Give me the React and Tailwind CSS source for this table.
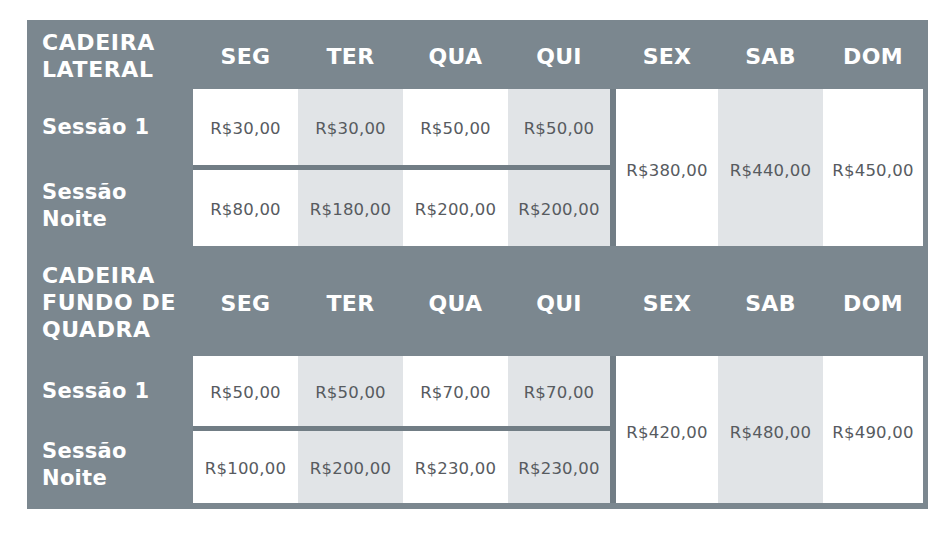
import React from "react";

const days = ["SEG", "TER", "QUA", "QUI"];
const days2 = ["SEX", "SAB", "DOM"];

function HeaderCell({ children }) {
  return (
    <div className="flex items-center justify-center pt-[4px] text-white font-bold text-[22px] tracking-[0.3px]">
      {children}
    </div>
  );
}

function Price({ children, gray, span }) {
  return (
    <div
      className={
        "flex items-center justify-center text-[#575b5f] text-[16.5px] tracking-[0.2px] " +
        (gray ? "bg-[#e1e4e7] " : "bg-white ") +
        (span ? "row-span-3 pt-[7px]" : "pt-[5px]")
      }
    >
      {children}
    </div>
  );
}

function Section({ title, r1, r2, weekend }) {
  return (
    <>
      <div className="flex items-center pl-[15px] pt-[2px] text-white font-bold text-[22px] leading-[27px] tracking-[0.6px]">
        <div>{title}</div>
      </div>
      {days.map((d) => (
        <HeaderCell key={d}>{d}</HeaderCell>
      ))}
      <div />
      {days2.map((d) => (
        <HeaderCell key={d}>{d}</HeaderCell>
      ))}

      <div className="flex items-center pl-[15px] text-white font-bold text-[21px] leading-[27px] tracking-[0.3px]">
        Sessão 1
      </div>
      {r1.map((p, i) => (
        <Price key={i} gray={i % 2 === 1}>
          {p}
        </Price>
      ))}
      <div className="row-span-3 bg-[#717d85]" />
      {weekend.map((p, i) => (
        <Price key={i} gray={i === 1} span>
          {p}
        </Price>
      ))}

      <div />
      <div className="col-span-4 bg-[#717d85]" />

      <div className="flex items-center pl-[15px] text-white font-bold text-[21px] leading-[27px] tracking-[0.3px] pb-[4px]">
        <div>
          Sessão
          <br />
          Noite
        </div>
      </div>
      {r2.map((p, i) => (
        <Price key={i} gray={i % 2 === 1}>
          {p}
        </Price>
      ))}
    </>
  );
}

export default function App() {
  return (
    <div
      className="min-h-[536px] w-[950px] bg-white pt-[20px] pl-[27px]"
      style={{ fontFamily: '"DejaVu Sans", "Liberation Sans", sans-serif' }}
    >
      <div className="w-fit bg-[#7b878f] pr-[5px] pb-[6px]">
        <div className="grid grid-cols-[166px_105px_105px_105px_102px_6px_102px_105px_100px] grid-rows-[69px_76px_5px_76px_110px_70px_5px_72px]">
          <Section
            title={
              <>
                CADEIRA
                <br />
                LATERAL
              </>
            }
            r1={["R$30,00", "R$30,00", "R$50,00", "R$50,00"]}
            r2={["R$80,00", "R$180,00", "R$200,00", "R$200,00"]}
            weekend={["R$380,00", "R$440,00", "R$450,00"]}
          />
          <Section
            title={
              <>
                CADEIRA
                <br />
                FUNDO DE
                <br />
                QUADRA
              </>
            }
            r1={["R$50,00", "R$50,00", "R$70,00", "R$70,00"]}
            r2={["R$100,00", "R$200,00", "R$230,00", "R$230,00"]}
            weekend={["R$420,00", "R$480,00", "R$490,00"]}
          />
        </div>
      </div>
    </div>
  );
}
